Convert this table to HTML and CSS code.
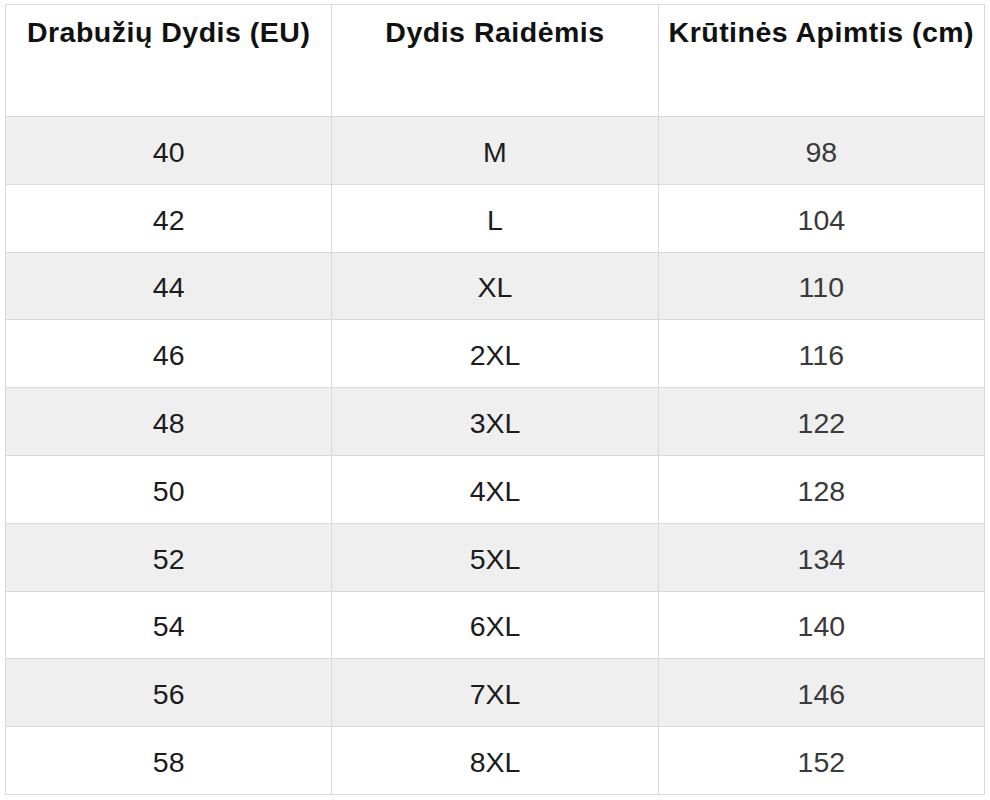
FILE: index.html
```html
<!DOCTYPE html>
<html lang="lt">
<head>
<meta charset="utf-8">
<title>Dydžių lentelė</title>
<link rel="stylesheet" href="styles.css">
</head>
<body>
<table class="sizes">
  <thead>
    <tr>
      <th>Drabužių Dydis (EU)</th>
      <th>Dydis Raidėmis</th>
      <th>Krūtinės Apimtis (cm)</th>
    </tr>
  </thead>
  <tbody>
    <tr><td>40</td><td>M</td><td class="num">98</td></tr>
    <tr><td>42</td><td>L</td><td class="num">104</td></tr>
    <tr><td>44</td><td>XL</td><td class="num">110</td></tr>
    <tr><td>46</td><td>2XL</td><td class="num">116</td></tr>
    <tr><td>48</td><td>3XL</td><td class="num">122</td></tr>
    <tr><td>50</td><td>4XL</td><td class="num">128</td></tr>
    <tr><td>52</td><td>5XL</td><td class="num">134</td></tr>
    <tr><td>54</td><td>6XL</td><td class="num">140</td></tr>
    <tr><td>56</td><td>7XL</td><td class="num">146</td></tr>
    <tr><td>58</td><td>8XL</td><td class="num">152</td></tr>
  </tbody>
</table>
</body>
</html>
```
FILE: styles.css
```css
html, body {
  margin: 0;
  padding: 0;
  background: #ffffff;
}
body {
  padding: 4px 0 0 5px;
  font-family: "Liberation Sans", Arial, sans-serif;
}
.sizes {
  border-collapse: collapse;
  table-layout: fixed;
  width: 980px;
}
.sizes th,
.sizes td {
  border: 1px solid #dadada;
  text-align: center;
  padding: 0;
}
.sizes th {
  height: 101px;
  vertical-align: top;
  padding-top: 10px;
  font-size: 28.5px;
  letter-spacing: 0.5px;
  font-weight: bold;
  color: #111111;
  line-height: 34px;
  white-space: nowrap;
}
.sizes td {
  height: 62.8px;
  padding-top: 4px;
  vertical-align: middle;
  font-size: 28.5px;
  color: #1c1c1c;
}
.sizes td.num {
  color: #3a3a3a;
}
.sizes tbody tr:nth-child(odd) td {
  background: #efefef;
}
```
